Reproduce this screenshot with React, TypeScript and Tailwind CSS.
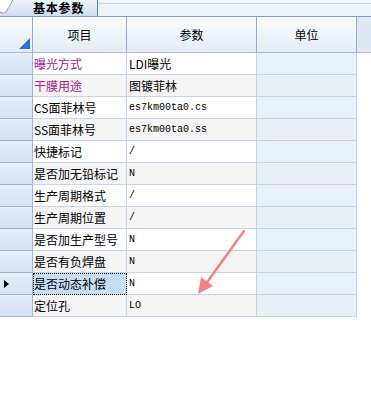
import React from 'react'

const ROWS = [
  { name: '曝光方式', value: 'LDI曝光', hl: true },
  { name: '干膜用途', value: '图镀菲林', hl: true },
  { name: 'CS面菲林号', value: 'es7km00ta0.cs', mono: true },
  { name: 'SS面菲林号', value: 'es7km00ta0.ss', mono: true },
  { name: '快捷标记', value: '/', mono: true },
  { name: '是否加无铅标记', value: 'N', mono: true },
  { name: '生产周期格式', value: '/', mono: true },
  { name: '生产周期位置', value: '/', mono: true },
  { name: '是否加生产型号', value: 'N', mono: true },
  { name: '是否有负焊盘', value: 'N', mono: true },
  { name: '是否动态补偿', value: 'N', mono: true, selected: true },
  { name: '定位孔', value: 'LO', mono: true },
]

const CJK = { fontFamily: '"Noto Sans CJK SC", "Liberation Sans", sans-serif' }

export default function App() {
  return (
    <div className="relative w-[371px] h-[411px] bg-white overflow-hidden text-[12px] text-black" style={CJK}>
      {/* Tab strip */}
      <div className="flex h-[17px] bg-gradient-to-b from-[#f3f7fd] to-[#dde7f5] border-b border-[#7d9bcb]">
        <div className="relative w-[98px] h-full flex items-center bg-gradient-to-b from-[#eef3fb] to-[#cfdcf0] border-r border-[#5f7fae]">
          <svg className="absolute left-0 top-0" width="14" height="16" viewBox="0 0 14 16">
            <path d="M0 16 L0 10 Q2 14 6 12 L13 0 L0 0 Z" fill="#ffffff" />
            <path d="M0 12 Q3 15 6 12 L13 0" stroke="#8aa3c8" fill="none" />
          </svg>
          <span className="font-bold text-[12px] leading-[14px] pl-[33px] tracking-[0.8px] whitespace-nowrap">基本参数</span>
        </div>
        <div className="flex-1 mt-[3px] border-t border-[#c7d6ec] bg-[#edf3fb]" />
      </div>

      {/* Header */}
      <div className="flex h-[36px] bg-gradient-to-b from-[#fbfdff] to-[#e4ecf8] border-b border-[#a7bcda]">
        <div className="relative w-[33px] border-r border-[#94abcf]">
          <svg className="absolute right-[2px] bottom-[3px]" width="11" height="11" viewBox="0 0 11 11">
            <path d="M11 0 L11 11 L0 11 Z" fill="#2f6fc4" />
          </svg>
        </div>
        <div className="w-[94px] flex items-center justify-center border-r border-[#94abcf]">项目</div>
        <div className="w-[130px] flex items-center justify-center border-r border-[#94abcf]">参数</div>
        <div className="w-[100px] flex items-center justify-center border-r border-[#94abcf]">单位</div>
        <div className="flex-1 bg-[#dfe8f5]" />
      </div>

      {/* Rows */}
      {ROWS.map((r, i) => {
        const odd = i % 2 === 0
        return (
          <div key={r.name} className="flex h-[22px]">
            <div className="w-[33px] flex items-center pl-[4px] bg-gradient-to-b from-[#e6eef9] to-[#d4e1f3] border-r border-b border-[#9fb5d6]">
              {r.selected && (
                <svg width="5" height="8" viewBox="0 0 5 8">
                  <path d="M0 0 L5 4 L0 8 Z" fill="#000" />
                </svg>
              )}
            </div>
            <div
              className={`w-[94px] flex items-center pl-[1px] whitespace-nowrap border-r border-b border-[#c5d5ec] ${
                r.selected ? 'bg-[#c7ddf6] outline-1 outline-dotted outline-black -outline-offset-1' : odd ? 'bg-white' : 'bg-[#f4f4f4]'
              } ${r.hl ? 'text-[#a2218d]' : ''}`}
            >
              {r.name}
            </div>
            <div
              className={`w-[130px] flex items-center pl-[2px] whitespace-nowrap border-r border-b border-[#c5d5ec] ${
                odd ? 'bg-white' : 'bg-[#f4f4f4]'
              }`}
            >
              {r.mono ? (
                <span className="text-[10px]" style={{ fontFamily: '"Liberation Mono", monospace' }}>
                  {r.value}
                </span>
              ) : (
                r.value
              )}
            </div>
            <div className={`w-[100px] border-r border-b border-[#c5d5ec] ${odd ? 'bg-[#e8f0fb]' : 'bg-[#eaeff6]'}`} />
            <div className="flex-1 bg-white" />
          </div>
        )
      })}

      {/* Annotation arrow */}
      <svg className="absolute left-0 top-0 pointer-events-none" width="371" height="411">
        <line x1="244" y1="231" x2="205" y2="285" stroke="#f08483" strokeWidth="2.5" strokeLinecap="round" />
        <path d="M198 294 L201 277 L213 286 Z" fill="#f08483" />
      </svg>
    </div>
  )
}
